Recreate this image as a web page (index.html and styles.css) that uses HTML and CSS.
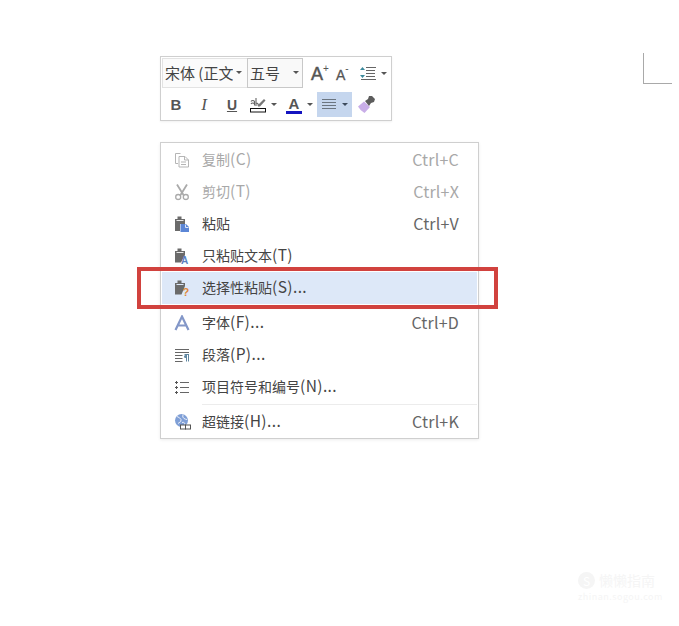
FILE: index.html
```html
<!DOCTYPE html>
<html lang="zh-CN">
<head>
<meta charset="utf-8">
<title>右键菜单</title>
<link rel="stylesheet" href="styles.css">
</head>
<body>
<div class="page">
  <div class="toolbar">
    <div class="tb-row">
      <div class="combo combo-font"><span class="combo-text">宋体 (正文</span><i class="caret caret-font"></i></div>
      <div class="combo combo-size"><span class="combo-text">五号</span><i class="caret caret-size"></i></div>
      <div class="btn btn-grow"><span class="a-big">A</span><span class="a-sup">+</span></div>
      <div class="btn btn-shrink"><span class="a-small">A</span><span class="a-sup">-</span></div>
      <div class="btn btn-spacing">
        <svg class="fix" width="16" height="15" viewBox="0 0 16 15"><path d="M6 1.500h10M6 4.500h9M6 7.500h9M6 10.500h9M1 13.500h15" stroke="#666" fill="none"/><path d="M0 4l2.500-3L5 4zM0 9l2.500 3L5 9z" fill="#3c8a9c"/></svg>
        <i class="caret"></i>
      </div>
    </div>
    <div class="tb-row tb-row2">
      <div class="btn btn-b">B</div>
      <div class="btn btn-i">I</div>
      <div class="btn btn-u">U</div>
      <div class="btn btn-hl">
        <svg class="fix" width="16" height="17" viewBox="0 0 16 17"><path d="M1 5.500a2 2 0 0 1 3.500 0v4M1 8a2 2 0 0 1 3.500 0M6 10V2M6 7a2 2 0 0 1 2 3" stroke="#666" stroke-width="1.100" fill="none"/><path d="M8 9 14 3l1.500 1.500L10 10.500H8z" fill="#777"/><rect x=".5" y="12.500" width="15" height="3.500" fill="#fff" stroke="#111"/></svg>
        <i class="caret"></i>
      </div>
      <div class="btn btn-color">
        <span class="color-a">A</span>
        <i class="caret"></i>
      </div>
      <div class="btn btn-align">
        <svg class="fix" width="14" height="11" viewBox="0 0 14 11"><path d="M0 .5h14M0 3.500h14M0 6.500h14M0 9.500h14" stroke="#6b7580" fill="none"/></svg>
        <i class="caret caret-dark"></i>
      </div>
      <div class="btn btn-brush">
        <svg class="fix" width="17" height="17" viewBox="0 0 17 17"><path d="M0 10.500 6 5.500l6 5.500-5.500 6Q2.500 15 0 10.500z" fill="#c9aee8"/><path d="M7 5l3-2 1-3h3l3 3-1 3-3 1-2 3z" fill="#5c5c5c"/></svg>
      </div>
    </div>
  </div>

  <div class="menu">
    <div class="item item-off">
      <svg class="ico" width="16" height="16" viewBox="0 0 16 16"><path d="M6.500 1.500H1.500v10H4M5 4.500h6l3.500 3.500v7H5zM10.500 4.500V8h4M7 10h5M7 12.500h5" stroke="#b5b5b5" fill="none"/></svg>
      <span class="label">复制<span class="lat">(C)</span></span><span class="key">Ctrl+C</span>
    </div>
    <div class="item item-off">
      <svg class="ico" width="16" height="17" viewBox="0 0 16 17"><path d="M3 1l6.500 10.500M13 1 6.500 11.500" stroke="#aaa" stroke-width="1.800" fill="none"/><circle cx="4.200" cy="13.500" r="2.500" fill="none" stroke="#aaa" stroke-width="1.300"/><circle cx="11.800" cy="13.500" r="2.500" fill="none" stroke="#aaa" stroke-width="1.300"/></svg>
      <span class="label">剪切<span class="lat">(T)</span></span><span class="key">Ctrl+X</span>
    </div>
    <div class="item">
      <svg class="ico" width="16" height="16" viewBox="0 0 16 16"><path d="M1 3h2.500V.5h4V3H11v5H6v7H1z" fill="#6a6a6a"/><path d="M2.500 4h7v1h-7z" fill="#e8e8e8"/><path d="M6.500 8h5.500l3 3v5H6.500z" fill="#5b86d6"/><path d="M11.500 8.500v3h3" stroke="#dfe8f8" fill="none"/></svg>
      <span class="label">粘贴</span><span class="key">Ctrl+V</span>
    </div>
    <div class="item">
      <svg class="ico" width="16" height="16" viewBox="0 0 16 16"><path d="M1 3h2.500V.5h4V3H11v4L7 14.500H1z" fill="#6a6a6a"/><path d="M2.500 4h7v1h-7z" fill="#e8e8e8"/><text class="ico-a" x="7" y="15.500">A</text></svg>
      <span class="label">只粘贴文本<span class="lat">(T)</span></span>
    </div>
    <div class="item item-on">
      <svg class="ico" width="16" height="16" viewBox="0 0 16 16"><path d="M1 3h2.500V.5h4V3H11v3L7.500 14.500H1z" fill="#6a6a6a"/><path d="M2.500 4h7v1h-7z" fill="#dde8f8"/><text class="ico-q" x="8.500" y="15.500">?</text></svg>
      <span class="label">选择性粘贴<span class="lat">(S)...</span></span>
    </div>
    <div class="sep"></div>
    <div class="item">
      <svg class="ico" width="16" height="16" viewBox="0 0 16 16"><path d="M1.500 15 8 1.500 14.500 15M4 10.500h8" stroke="#8397c8" stroke-width="2.200" fill="none"/></svg>
      <span class="label">字体<span class="lat">(F)...</span></span><span class="key">Ctrl+D</span>
    </div>
    <div class="item">
      <svg class="ico" width="16" height="14" viewBox="0 0 16 14"><path d="M1 1.500h14M1 4.500h14M1 7.500h7.500M1 10.500h7.500M1 13.500h7.500" stroke="#666" fill="none"/><path d="M10.500 6.500h4.500M12.500 6.500v7M14.500 6.500v7" stroke="#5f86a0" fill="none"/><circle cx="11.500" cy="8.500" r="1.500" fill="#5f86a0"/></svg>
      <span class="label">段落<span class="lat">(P)...</span></span>
    </div>
    <div class="item">
      <svg class="ico" width="16" height="14" viewBox="0 0 16 14"><path d="M6 2.500h9M6 7.500h9M6 12.500h9" stroke="#666" fill="none"/><path d="M1 2.500h3M2.500 1v3M1 7.500h3M2.500 6v3M1 12.500h3M2.500 11v3" stroke="#555" fill="none"/></svg>
      <span class="label">项目符号和编号<span class="lat">(N)...</span></span>
    </div>
    <div class="sep"></div>
    <div class="item">
      <svg class="ico" width="17" height="17" viewBox="0 0 17 17"><circle cx="7.500" cy="7" r="6.500" fill="#7f9fd6"/><path d="M3 3q3 1 4 3T4 10M9 1q-1 3 1 4t3 1M8 9q3-1 3 3" stroke="#e9eef8" fill="none"/><rect x="6.500" y="11.500" width="5" height="4" fill="#fff" stroke="#555"/><rect x="11.500" y="11.500" width="5" height="4" fill="#fff" stroke="#555"/></svg>
      <span class="label">超链接<span class="lat">(H)...</span></span><span class="key">Ctrl+K</span>
    </div>
  </div>

  <div class="callout"></div>
  <div class="corner"></div>
  <div class="watermark">
    <div class="wm-top"><span class="wm-s">S</span><span>懒懒指南</span></div>
    <div class="wm-bottom">zhinan.sogou.com</div>
  </div>
</div>
</body>
</html>
```

FILE: styles.css
```css
* { box-sizing: border-box; }
html, body { margin: 0; padding: 0; background: #fff; }
.page {
  position: relative;
  width: 679px;
  height: 626px;
  overflow: hidden;
  padding: 56px 0 0 160px;
  font-family: "Noto Sans CJK SC", "Noto Sans", sans-serif;
  color: #444;
}

/* mini toolbar */
.toolbar {
  width: 232px;
  height: 65px;
  border: 1px solid #cfcfcf;
  padding: 1px;
  background: #fff;
  box-shadow: 0 1px 2px rgba(0,0,0,.06);
}
.tb-row { display: flex; align-items: stretch; height: 30px; }
.tb-row2 { height: 25px; margin-top: 4px; }
.combo {
  position: relative;
  display: flex;
  align-items: center;
  font-size: 15px;
  color: #444;
  background: #fbfbfb;
  padding-bottom: 1px;
}
.combo-font { width: 85px; border: 1px solid #e3e3e3; border-right: 0; padding-left: 2px; }
.combo-size { width: 56px; border: 1px solid #c8c8c8; padding-left: 2px; background: #f9f9f9; }
.combo-text { white-space: nowrap; overflow: hidden; }
.fix { flex: none; }
.caret {
  display: block;
  width: 0;
  height: 0;
  border-left: 3px solid transparent;
  border-right: 3px solid transparent;
  border-top: 3px solid #555;
  flex: none;
}
.caret-font { margin-left: 3px; }
.caret-size { margin-left: auto; margin-right: 3px; }
.caret-dark { border-top-color: #3c4a5c; }
.btn {
  display: flex;
  align-items: center;
  justify-content: center;
  flex: none;
  color: #555;
  font-family: "Liberation Sans", sans-serif;
}
.btn-grow { width: 24px; margin-left: 3px; align-items: flex-start; padding-top: 6px; justify-content: flex-start; padding-left: 5px; }
.btn-shrink { width: 24px; align-items: flex-start; padding-top: 6px; justify-content: flex-start; padding-left: 6px; }
.btn-spacing { width: 36px; gap: 5px; justify-content: flex-start; padding-left: 6px; }
.a-big { font-size: 18px; line-height: 18px; margin-top: 1px; -webkit-text-stroke: .5px #555; }
.a-small { font-size: 14px; line-height: 14px; margin-top: 4px; -webkit-text-stroke: .3px #555; }
.a-sup { font-size: 10px; line-height: 10px; }
.btn-b, .btn-i, .btn-u { width: 28px; font-size: 15px; }
.btn-b { font-weight: bold; }
.btn-i { font-family: "Liberation Serif", serif; font-style: italic; font-size: 17px; }
.btn-u { font-weight: bold; text-decoration: underline; font-size: 14px; }
.btn-hl { width: 36px; gap: 5px; justify-content: flex-start; padding-left: 4px; }
.btn-color { width: 35px; gap: 5px; justify-content: flex-start; padding-left: 4px; }
.color-a {
  width: 16px;
  font-size: 15px;
  line-height: 15px;
  font-weight: bold;
  text-align: center;
  border-bottom: 3px solid #1414c0;
}
.btn-align { width: 35px; background: #c5d6ee; gap: 6px; }
.btn-brush { width: 28px; }

/* context menu */
.menu {
  width: 319px;
  margin-top: 21px;
  border: 1px solid #cfcfcf;
  padding: 1px 1px 0;
  background: #fff;
  box-shadow: 0 1px 3px rgba(0,0,0,.08);
}
.item {
  position: relative;
  display: flex;
  align-items: center;
  height: 32px;
  padding: 0 18px 2px 40px;
  font-size: 14px;
  color: #444;
}
.lat { font-size: 15.500px; line-height: 1; letter-spacing: .4px; }
.item-off { color: #a8a8a8; }
.item-on { background: #dde8f8; }
.ico { position: absolute; left: 12px; top: 50%; transform: translateY(-50%); }
.ico-a { font: bold 10px "Liberation Sans", sans-serif; fill: #5b7fc0; }
.ico-q { font: bold 11px "Liberation Sans", sans-serif; fill: #e0883a; }
.key { margin-left: auto; color: #666; font-size: 16px; line-height: 1; letter-spacing: .2px; }
.item-off .key { color: #a8a8a8; }
.sep { height: 3px; padding: 1px 0; margin-left: 40px; }
.sep::before { content: ""; display: block; height: 1px; background: #ececec; }

/* overlays */
.callout {
  position: absolute;
  left: 137px;
  top: 267px;
  width: 361px;
  height: 42px;
  border: 4px solid #d1423e;
}
.corner {
  position: absolute;
  left: 643px;
  top: 53px;
  width: 29px;
  height: 31px;
  border-left: 1px solid #a9a9a9;
  border-bottom: 1px solid #a9a9a9;
}
.watermark {
  position: absolute;
  left: 578px;
  top: 570px;
  width: 80px;
  color: #f5f5f5;
}
.wm-top { display: flex; align-items: center; gap: 4px; font-size: 14px; line-height: 20px; white-space: nowrap; }
.wm-s {
  width: 17px;
  height: 17px;
  border-radius: 50%;
  background: #f5f5f5;
  color: #fff;
  font-size: 12px;
  line-height: 17px;
  text-align: center;
}
.wm-bottom { font-size: 9px; line-height: 10px; margin-top: 2px; letter-spacing: .5px; white-space: nowrap; }
```
